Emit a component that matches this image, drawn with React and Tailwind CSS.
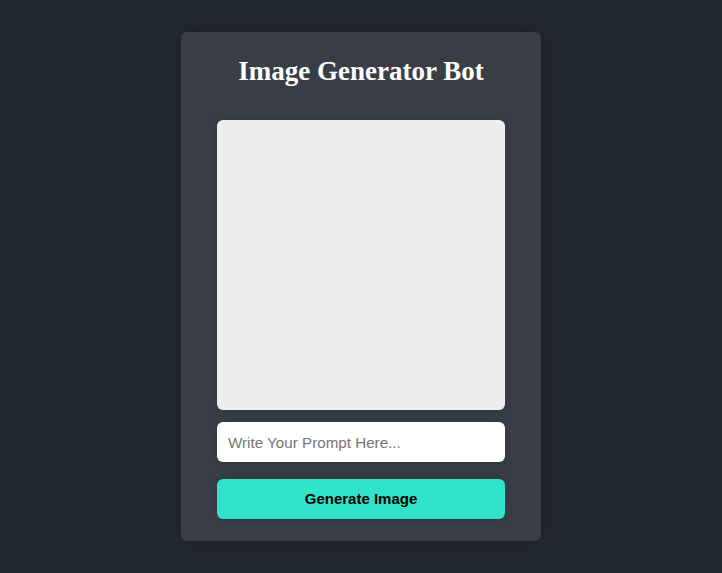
export default function App() {
  return (
    <div className="min-h-[573px] w-full bg-[#222831] flex justify-center pt-[32px]" style={{ fontFamily: '"Liberation Sans", Arial, sans-serif' }}>
      <div className="w-[360px] h-[509px] bg-[#393e46] rounded-md shadow-[0_0_20px_rgba(0,0,0,0.25)] px-[36px] flex flex-col">
        <h1 className="text-white text-[27px] font-bold text-center mt-[23px] leading-[32px]" style={{ fontFamily: '"Liberation Serif", "Times New Roman", serif' }}>
          Image Generator Bot
        </h1>
        <div className="mt-[33px] h-[290px] w-full bg-[#eeeeee] rounded-md shadow-[0_0_12px_rgba(0,0,0,0.15)]"></div>
        <input
          className="mt-[12px] h-[40px] w-full bg-white rounded-md px-[11px] text-[15.2px] text-black placeholder:text-[#757575] outline-none shadow-[0_0_12px_rgba(0,0,0,0.15)]"
          placeholder="Write Your Prompt Here..."
        />
        <button className="mt-[17px] h-[40px] w-full bg-[#30e3ca] rounded-md text-black font-bold text-[15px] shadow-[0_0_12px_rgba(0,0,0,0.15)]">
          Generate Image
        </button>
      </div>
    </div>
  );
}
